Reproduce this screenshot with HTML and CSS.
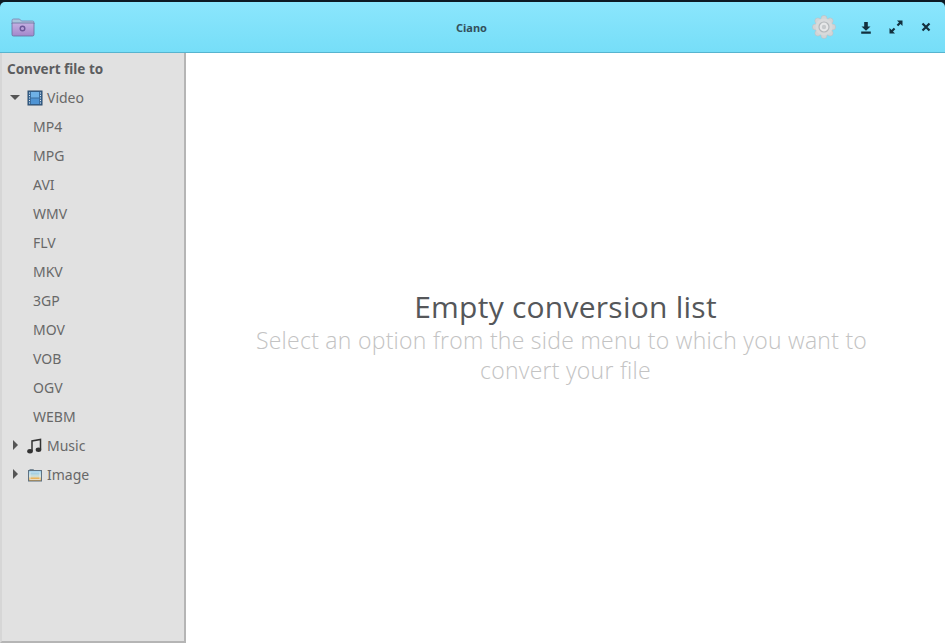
FILE: index.html
```html
<!DOCTYPE html>
<html lang="en">
<head>
<meta charset="utf-8">
<title>Ciano</title>
<link rel="stylesheet" href="styles.css">
</head>
<body>
<div class="window">
  <header class="titlebar">
    <div class="bar-left">
      <svg class="folder" width="24" height="20" viewBox="0 0 24 20">
        <defs>
          <linearGradient id="fold" x1="0" y1="0" x2="0" y2="1">
            <stop offset="0" stop-color="#c4b0e2"/>
            <stop offset="1" stop-color="#a387cb"/>
          </linearGradient>
        </defs>
        <path d="M1 3.500q0-1.500 1.500-1.500h6l2 2h11q1.500 0 1.500 1.500V7H1z" fill="#a9c4dc" stroke="#7d7faf" stroke-width=".8"/>
        <path d="M1 6h22v11.500q0 1.500-1.500 1.500h-19Q1 19 1 17.500z" fill="url(#fold)" stroke="#64709c" stroke-width=".8"/>
        <circle cx="11.500" cy="11.500" r="2.300" fill="none" stroke="#6a5798" stroke-width="1.400"/>
      </svg>
    </div>
    <div class="title">Ciano</div>
    <div class="bar-right">
      <svg class="gear" width="24" height="24" viewBox="0 0 24 24">
        <g fill="#d2d4d6" stroke="#b9bdc0" stroke-width=".5">
          <circle cx="12" cy="3.400" r="3"/>
          <circle cx="18.100" cy="5.900" r="3"/>
          <circle cx="20.600" cy="12" r="3"/>
          <circle cx="18.100" cy="18.100" r="3"/>
          <circle cx="12" cy="20.600" r="3"/>
          <circle cx="5.900" cy="18.100" r="3"/>
          <circle cx="3.400" cy="12" r="3"/>
          <circle cx="5.900" cy="5.900" r="3"/>
        </g>
        <circle cx="12" cy="12" r="8.500" fill="#d8dadb"/>
        <circle cx="12" cy="12" r="5" fill="#e6e7e8" stroke="#b4b8bb" stroke-width="1.200"/>
        <circle cx="12" cy="12" r="2.200" fill="#c6c9cb"/>
      </svg>
      <svg class="download" width="12" height="12" viewBox="0 0 12 12">
        <path d="M4.200 0h3.600v4.500H10.500L6 8.800 1.500 4.500h2.700zM1.200 9.500h9.600v2.200H1.200z" fill="#12303e"/>
      </svg>
      <svg class="expand" width="14" height="14" viewBox="0 0 14 14">
        <path d="M8 0.500h5.500V6l-2-2-2.300 2.300-1.500-1.500L10 2.500zM6 13.500H.5V8l2 2 2.300-2.300 1.500 1.500L4 11.500z" fill="#12303e"/>
      </svg>
      <svg class="close" width="10" height="10" viewBox="0 0 10 10">
        <path d="M1.500 1.500l7 7M8.500 1.500l-7 7" stroke="#12303e" stroke-width="2.200" fill="none"/>
      </svg>
    </div>
  </header>
  <div class="content">
    <aside class="sidebar">
      <div class="heading">Convert file to</div>
      <ul class="tree">
        <li class="row parent">
          <span class="arrow-down"></span>
          <svg class="icon" width="16" height="16" viewBox="0 0 16 16">
            <rect x="1" y="1" width="14" height="14" fill="#3c6e9f" stroke="#2b4a6b"/>
            <rect x="4" y="2" width="8" height="5.500" fill="#6fb1e6"/>
            <rect x="4" y="8.500" width="8" height="5.500" fill="#4f94d4"/>
            <path d="M2 3h1M2 5.500h1M2 8h1M2 10.500h1M2 13h1M13 3h1M13 5.500h1M13 8h1M13 10.500h1M13 13h1" stroke="#dfe6ec" stroke-width="1"/>
          </svg>
          <span class="label">Video</span>
        </li>
        <li class="row child">MP4</li>
        <li class="row child">MPG</li>
        <li class="row child">AVI</li>
        <li class="row child">WMV</li>
        <li class="row child">FLV</li>
        <li class="row child">MKV</li>
        <li class="row child">3GP</li>
        <li class="row child">MOV</li>
        <li class="row child">VOB</li>
        <li class="row child">OGV</li>
        <li class="row child">WEBM</li>
        <li class="row parent">
          <span class="arrow-right"></span>
          <svg class="icon" width="16" height="16" viewBox="0 0 16 16">
            <path d="M5 13V3l8.500-1.500V11.500" fill="none" stroke="#333" stroke-width="1.500"/>
            <ellipse cx="3" cy="13.300" rx="2.800" ry="2.200" fill="#333"/>
            <ellipse cx="11.500" cy="11.800" rx="2.800" ry="2.200" fill="#333"/>
          </svg>
          <span class="label">Music</span>
        </li>
        <li class="row parent">
          <span class="arrow-right"></span>
          <svg class="icon" width="16" height="16" viewBox="0 0 16 16">
            <defs>
              <linearGradient id="pic" x1="0" y1="0" x2="0" y2="1">
                <stop offset="0" stop-color="#7cc0ea"/>
                <stop offset=".55" stop-color="#cfe0da"/>
                <stop offset=".75" stop-color="#eab45c"/>
                <stop offset="1" stop-color="#d99a3e"/>
              </linearGradient>
            </defs>
            <path d="M2.500 2.500h4l1 1" fill="none" stroke="#7b8a96"/>
            <rect x="1.500" y="3.500" width="13" height="10.500" fill="url(#pic)" stroke="#5f7282"/>
            <rect x="3" y="5" width="10" height="7.500" fill="none" stroke="#e9f2f6" stroke-opacity=".7"/>
          </svg>
          <span class="label">Image</span>
        </li>
      </ul>
    </aside>
    <main class="main">
      <h1 class="empty-title">Empty conversion list</h1>
      <p class="empty-text"><span class="line-one">Select an option from the side menu to which you want to</span> <span>convert your file</span></p>
    </main>
  </div>
</div>
</body>
</html>
```

FILE: styles.css
```css
html, body {
  margin: 0;
  padding: 0;
  height: 100%;
  background: #0d1a24;
  overflow: hidden;
}
.window {
  display: flex;
  flex-direction: column;
  height: 641px;
  margin-top: 2px;
  font-family: "Noto Sans", "Open Sans", sans-serif;
}
.titlebar {
  flex: 0 0 51px;
  display: flex;
  align-items: center;
  justify-content: space-between;
  box-sizing: border-box;
  padding: 0 14px 0 11px;
  background: linear-gradient(#8be6fd, #76def8);
  border-bottom: 1px solid #57b4cf;
  border-radius: 5px 5px 0 0;
  position: relative;
}
.bar-left {
  display: flex;
  align-items: center;
}
.title {
  position: absolute;
  left: 0;
  right: 2px;
  text-align: center;
  font-size: 11px;
  font-weight: 700;
  color: #33505c;
  pointer-events: none;
}
.bar-right {
  display: flex;
  align-items: center;
}
.gear { margin-right: 24px; }
.download { margin-right: 17px; position: relative; top: 1px; }
.expand { margin-right: 18px; }
.content {
  flex: 1;
  display: flex;
  min-height: 0;
  background: #fff;
}
.sidebar {
  flex: 0 0 186px;
  box-sizing: border-box;
  background: #e1e1e1;
  border-left: 2px solid #d6d6d6;
  border-right: 2px solid #b5b5b5;
  border-bottom: 2px solid #b5b5b5;
  color: #686868;
  font-size: 14px;
}
.heading {
  height: 28px;
  line-height: 29px;
  padding-left: 5px;
  margin-top: 2px;
  font-size: 13.5px;
  font-weight: 700;
  color: #5c5d5f;
}
.tree {
  list-style: none;
  margin: 0;
  padding: 0;
}
.row {
  height: 29px;
  line-height: 29px;
  display: flex;
  align-items: center;
}
.child { padding-left: 31px; }
.parent { position: relative; padding-left: 25px; }
.arrow-down {
  position: absolute;
  left: 8px;
  top: 12px;
  border-left: 5px solid transparent;
  border-right: 5px solid transparent;
  border-top: 5px solid #555;
}
.arrow-right {
  position: absolute;
  left: 11px;
  top: 9px;
  border-top: 5px solid transparent;
  border-bottom: 5px solid transparent;
  border-left: 5px solid #555;
}
.icon { margin-right: 4px; flex: none; }
.main {
  flex: 1;
  display: flex;
  flex-direction: column;
  align-items: center;
  padding-top: 236px;
  box-sizing: border-box;
}
.empty-title {
  margin: 0;
  font-size: 30px;
  font-weight: 400;
  line-height: 36px;
  letter-spacing: .25px;
  color: #55575a;
  font-family: "Open Sans", "Noto Sans", sans-serif;
}
.empty-text {
  margin: 0;
  width: 640px;
  text-align: center;
  font-size: 23px;
  font-weight: 300;
  line-height: 30px;
  letter-spacing: .27px;
  color: #c3c3c3;
  font-family: "Open Sans", "Noto Sans", sans-serif;
}
.line-one {
  display: block;
  padding-right: 8px;
}
```
